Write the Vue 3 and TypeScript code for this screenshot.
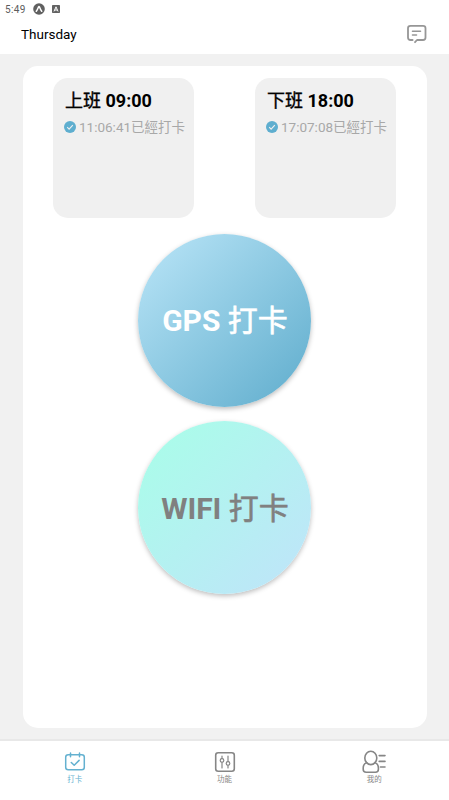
<script setup lang="ts">
interface Shift {
  label: string
  time: string
  punched: string
}

const shifts: Shift[] = [
  { label: '上班', time: '09:00', punched: '11:06:41' },
  { label: '下班', time: '18:00', punched: '17:07:08' },
]
</script>

<template>
  <div class="screen">
    <header class="header">
      <div class="status">
        <span class="clock">5:49</span>
        <svg class="status-expo" viewBox="0 0 12 12">
          <circle cx="6" cy="6" r="5.8" fill="#606060" />
          <path d="M3.3 8.3C4.3 7 5 5 5.6 3.9Q6 3.3 6.4 3.9C7 5 7.7 7 8.7 8.3" fill="none" stroke="#fff" stroke-width="1.5" stroke-linecap="round" />
        </svg>
        <svg class="status-app" viewBox="0 0 8 8">
          <rect width="8" height="8" rx=".7" fill="#626262" />
          <path d="M2 6.4 4 1.8l2 4.6M2.8 5h2.4" fill="none" stroke="#fff" stroke-width="1" />
        </svg>
      </div>
      <div class="title-bar">
        <h1 class="day">Thursday</h1>
        <svg class="message" viewBox="0 0 20 19" fill="none" stroke="#969696" stroke-width="1.8" stroke-linecap="round" stroke-linejoin="round">
          <path d="M5.600 15H3.500Q1 15 1 12.500V3.200Q1 .9 3.500 .9h12.500Q18.500 .9 18.500 3.200v9.300q0 2.500-2.500 2.500H10L8 17.200" />
          <path d="M5.500 6.300h8M5.500 10h4" stroke-width="1.600" />
        </svg>
      </div>
    </header>

    <main class="content">
      <section class="panel">
        <div class="shifts">
          <article v-for="shift in shifts" :key="shift.label" class="shift">
            <h2 class="shift-title"><span class="han">{{ shift.label }}</span> {{ shift.time }}</h2>
            <p class="shift-state">
              <svg class="check" viewBox="0 0 12 12">
                <circle cx="6" cy="6" r="6" fill="#5eaecf" />
                <path d="m3.200 6.200 1.900 1.900 3.700-3.900" fill="none" stroke="#f0f0f0" stroke-width="1.100" />
              </svg>
              <span>{{ shift.punched }}已經打卡</span>
            </p>
          </article>
        </div>
        <button class="punch gps" type="button">GPS <span class="han">打卡</span></button>
        <button class="punch wifi" type="button">WIFI <span class="han">打卡</span></button>
      </section>
    </main>

    <nav class="tabs">
      <a class="tab active">
        <svg viewBox="0 0 24 24" fill="none" stroke="currentColor" stroke-width="1.500" stroke-linecap="round" stroke-linejoin="round">
          <rect x="2.700" y="4.800" width="18.600" height="15" rx="2.500" />
          <path d="M7.500 3v3.700M16.500 3v3.700M8.300 12.500l2.900 2.800 4.900-4.900" />
        </svg>
        <span>打卡</span>
      </a>
      <a class="tab">
        <svg viewBox="0 0 24 24" fill="none" stroke="currentColor" stroke-width="1.200" stroke-linecap="round">
          <rect x="2.700" y="2.700" width="18.600" height="18.600" rx="2.500" stroke-width="1.600" />
          <path d="M9 6v2.500M9 12.300V18M15 6v5.500M15 15.300V18" />
          <circle cx="9" cy="10.400" r="1.800" />
          <circle cx="15" cy="13.400" r="1.800" />
        </svg>
        <span>功能</span>
      </a>
      <a class="tab">
        <svg viewBox="0 0 24 24" fill="none" stroke="currentColor" stroke-width="1.600" stroke-linecap="round" stroke-linejoin="round">
          <ellipse cx="8.800" cy="7.900" rx="6" ry="6.700" />
          <path d="M4.600 12.600Q1.200 14.200 1.200 18v1.200q0 3 3 3h9.200q3 0 3-3V18q0-3.800-3.400-5.400" />
          <path d="M17.200 5.600h5.800M17.200 11.400h5.800M18.400 17h4.600" />
        </svg>
        <span>我的</span>
      </a>
    </nav>
  </div>
</template>

<style>
body {
  margin: 0;
}
</style>

<style scoped>
.screen {
  display: flex;
  flex-direction: column;
  height: 800px;
  background: #f1f1f1;
  color: #000;
  font-family: Roboto, "Noto Sans CJK TC", sans-serif;
}

.header {
  height: 54px;
  background: #fff;
}

.status {
  display: flex;
  align-items: center;
  height: 18px;
  padding-left: 5px;
  color: #5c5c5c;
}

.clock {
  width: 28px;
  font-size: 10px;
  letter-spacing: 0.4px;
}

.status-expo {
  width: 12px;
  height: 12px;
}

.status-app {
  width: 8px;
  height: 8px;
  margin-left: 7px;
}

.title-bar {
  display: flex;
  align-items: center;
  justify-content: space-between;
  height: 32px;
  padding: 0 22px 0 21px;
}

.day {
  margin: 0;
  font-size: 13.5px;
  font-weight: 400;
}

.message {
  width: 20px;
  height: 19px;
}

.content {
  flex: 1;
  padding: 12px 22.5px 11px;
}

.panel {
  display: flex;
  flex-direction: column;
  align-items: center;
  box-sizing: border-box;
  height: 662px;
  padding-top: 12px;
  border-radius: 15px;
  background: #fff;
}

.shifts {
  display: flex;
  justify-content: space-between;
  width: 343px;
}

.shift {
  box-sizing: border-box;
  width: 141px;
  height: 140px;
  padding: 11px 0 0 11px;
  border-radius: 15px;
  background: #f0f0f0;
}

.shift-title {
  margin: 0 0 0 1px;
  font-size: 18px;
  font-weight: 700;
  line-height: 24px;
  white-space: nowrap;
}

.han {
  font-weight: 400;
  -webkit-text-stroke: 0.02em currentColor;
}

.shift-state {
  display: flex;
  align-items: center;
  gap: 3px;
  height: 18px;
  margin: 5px 0 0;
  color: #a8a8a8;
  font-size: 13.5px;
  line-height: 18px;
  white-space: nowrap;
}

.check {
  flex: none;
  width: 12px;
  height: 12px;
}

.punch {
  width: 173px;
  height: 173px;
  padding: 2px 0 0 1px;
  border: 0;
  border-radius: 50%;
  box-shadow: 0 2px 5px rgba(0, 0, 0, 0.26);
  font-family: inherit;
  font-size: 30px;
  font-weight: 700;
  line-height: 40px;
}

.gps {
  margin-top: 15.5px;
  background: linear-gradient(135deg, #bbe6f8 0%, #5eaccc 100%);
  color: #fff;
}

.wifi {
  margin-top: 14.5px;
  background: linear-gradient(135deg, #a8ffe8 0%, #c0e3fa 100%);
  color: #808080;
}

.tabs {
  display: flex;
  box-sizing: border-box;
  height: 61px;
  border-top: 2px solid #e8e8e8;
  background: #fff;
}

.tab {
  display: flex;
  flex: 1;
  flex-direction: column;
  align-items: center;
  padding-top: 9px;
  color: #868686;
}

.tab svg {
  width: 24px;
  height: 24px;
}

.tab span {
  font-size: 7.5px;
  line-height: 12px;
}

.tab.active {
  color: #64b1d0;
}
</style>
